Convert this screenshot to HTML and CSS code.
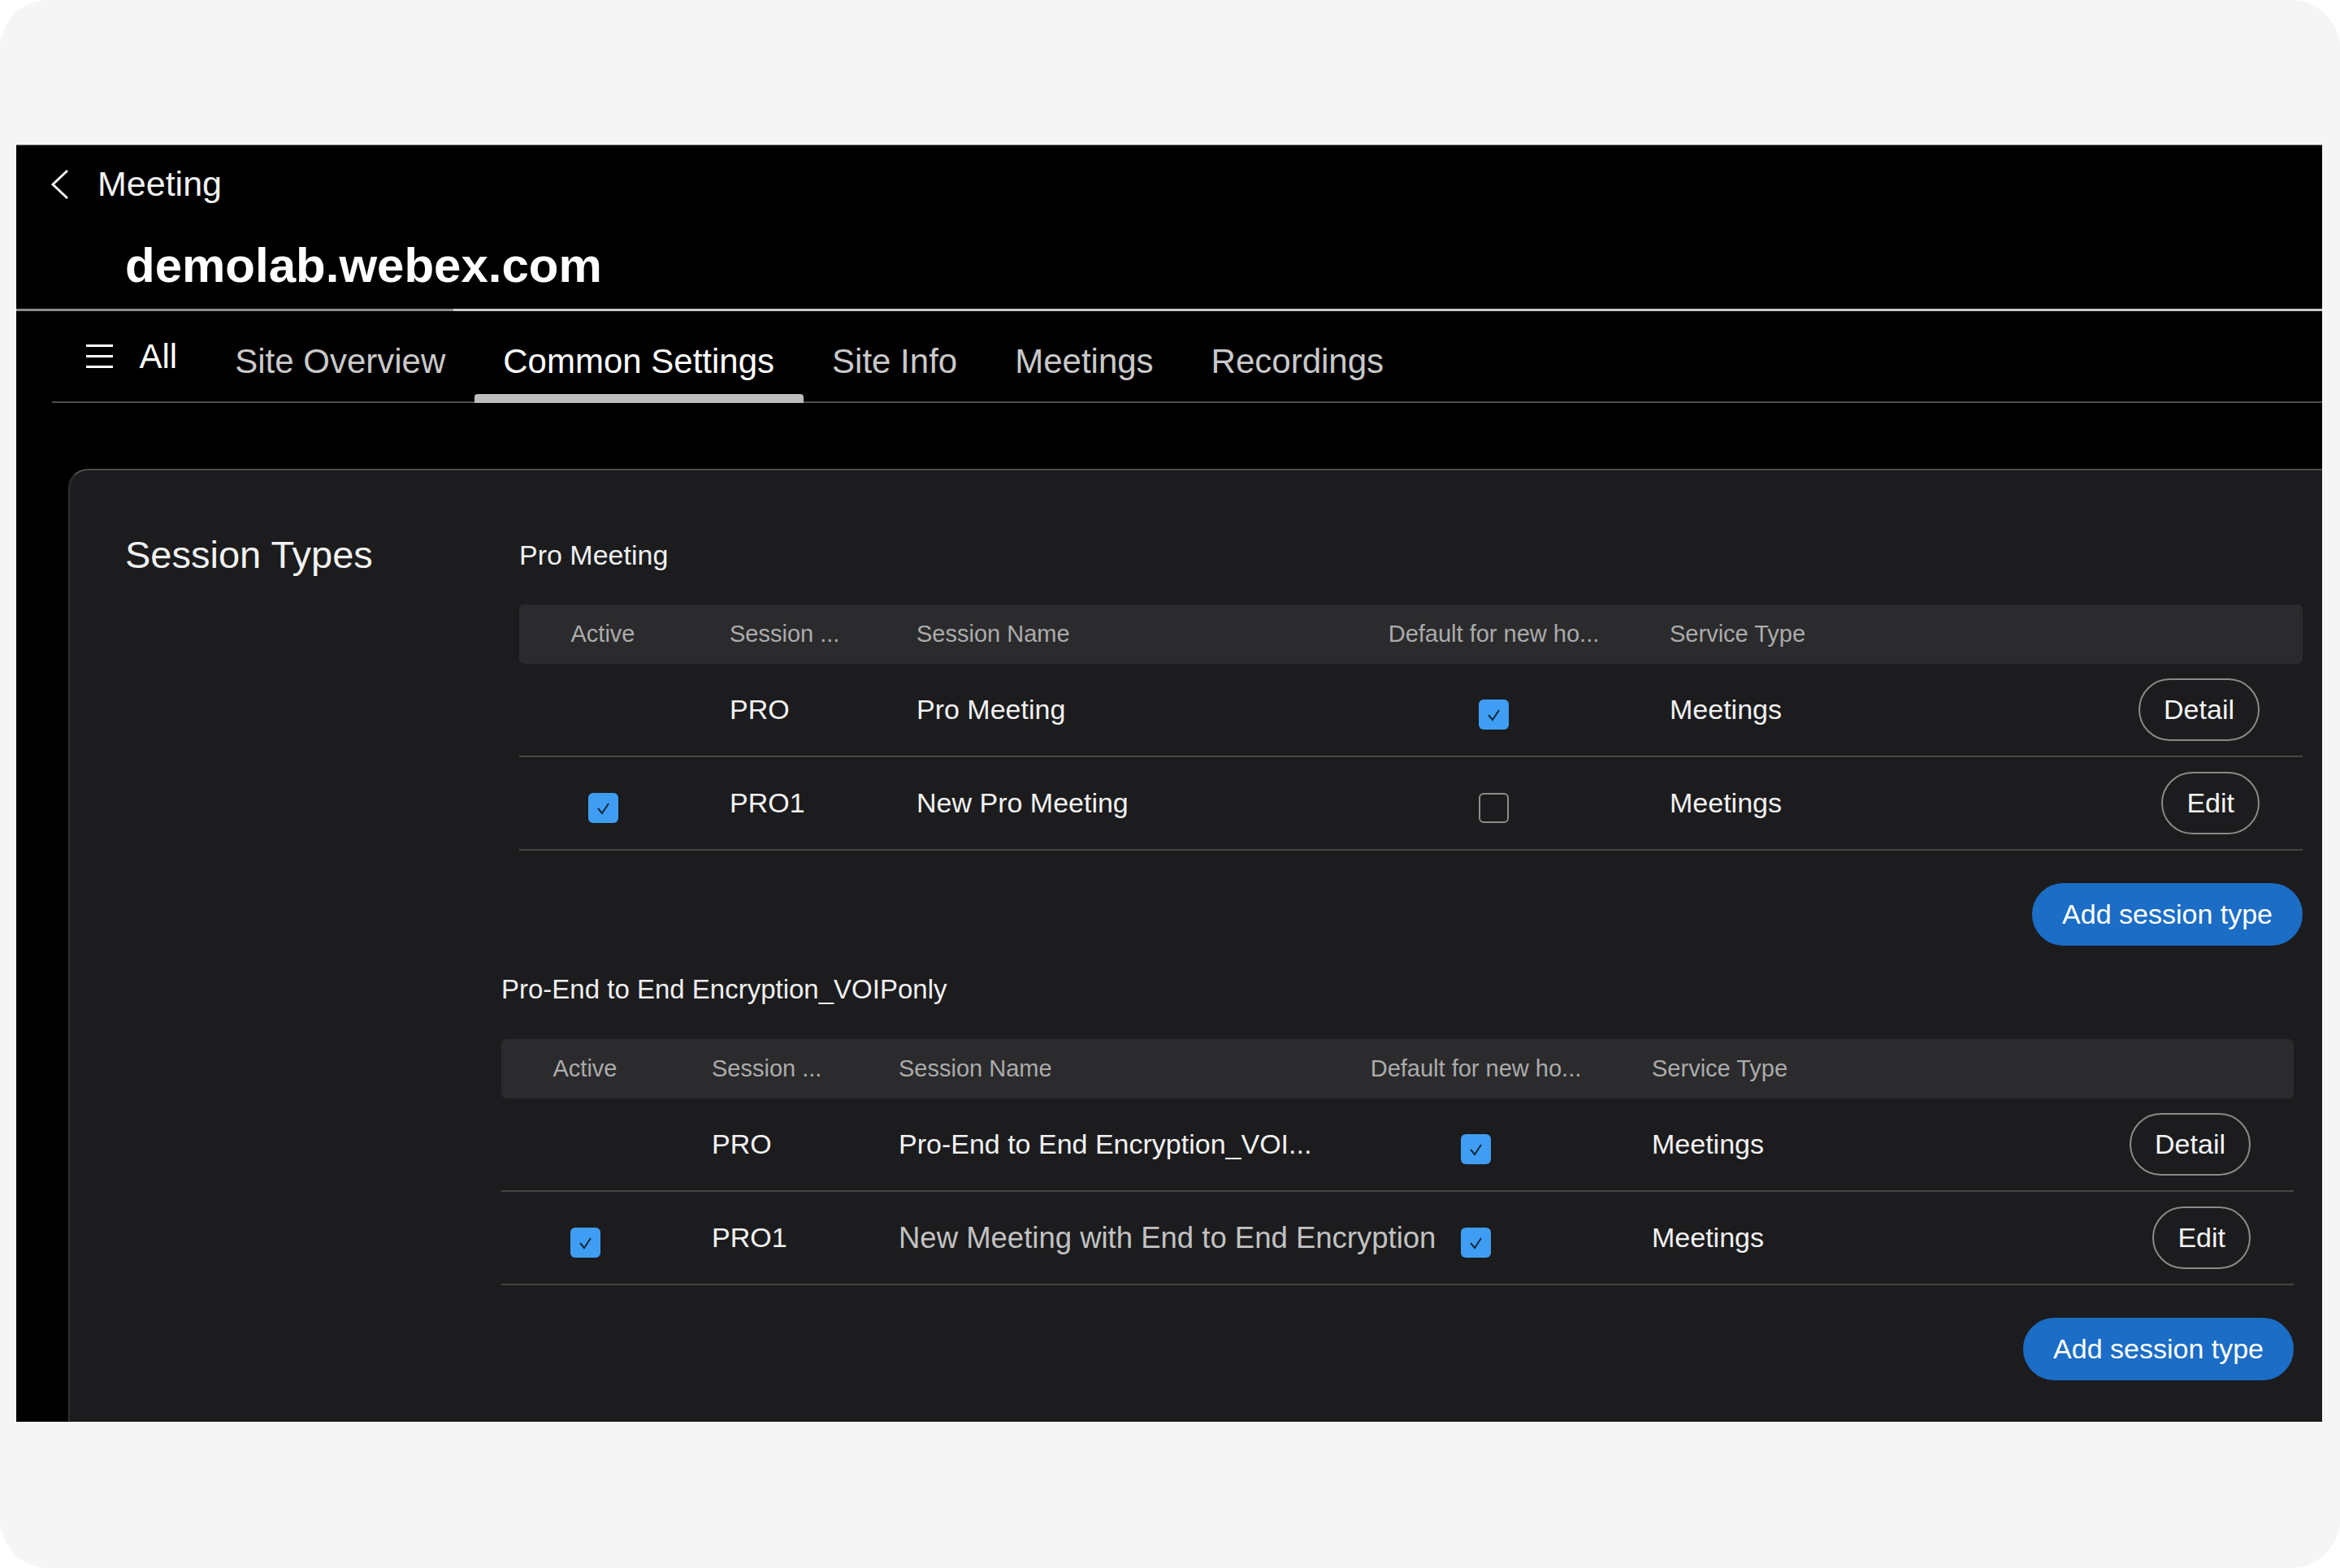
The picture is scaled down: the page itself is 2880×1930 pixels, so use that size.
FILE: index.html
```html
<!DOCTYPE html>
<html lang="en">
  <head>
    <meta charset="UTF-8" />
    <meta name="viewport" content="width=device-width, initial-scale=1.0" />
    <title>demolab.webex.com - Common Settings</title>
    <link rel="stylesheet" href="styles.css">
  </head>
  <body>
    <div class="frame">
      <div class="panel">
        <div class="topbar">
          <svg class="back" width="24" height="38" viewBox="0 0 24 38">
            <polyline points="21,2 3,19 21,36" fill="none" stroke="#f2f2f2" stroke-width="3" />
          </svg>
          <span>Meeting</span>
        </div>
        <h1 class="site">demolab.webex.com</h1>
        <div class="rule"></div>

        <nav class="tabs">
          <a class="tab all">
            <svg width="33" height="29" viewBox="0 0 33 29">
              <rect x="0" y="0" width="33" height="3" fill="#fff" />
              <rect x="0" y="13" width="33" height="3" fill="#fff" />
              <rect x="0" y="26" width="33" height="3" fill="#fff" />
            </svg>
            <span>All</span>
          </a>
          <a class="tab">Site Overview</a>
          <a class="tab active">Common Settings</a>
          <a class="tab">Site Info</a>
          <a class="tab">Meetings</a>
          <a class="tab">Recordings</a>
        </nav>

        <div class="card">
          <h2 class="card-title">Session Types</h2>
          <div class="sections">
            <section class="group">
              <h3>Pro Meeting</h3>
              <div class="table">
                <div class="row head">
                  <div class="c-active">Active</div>
                  <div class="c-code">Session ...</div>
                  <div class="c-name">Session Name</div>
                  <div class="c-default">Default for new ho...</div>
                  <div class="c-service">Service Type</div>
                  <div class="c-act"></div>
                </div>
                <div class="row">
                  <div class="c-active"></div>
                  <div class="c-code">PRO</div>
                  <div class="c-name">Pro Meeting</div>
                  <div class="c-default"><span class="check"><svg viewBox="0 0 37 37"><polyline points="12,19 17,25 25,13" /></svg></span></div>
                  <div class="c-service">Meetings</div>
                  <div class="c-act"><button class="btn">Detail</button></div>
                </div>
                <div class="row">
                  <div class="c-active"><span class="check"><svg viewBox="0 0 37 37"><polyline points="12,19 17,25 25,13" /></svg></span></div>
                  <div class="c-code">PRO1</div>
                  <div class="c-name">New Pro Meeting</div>
                  <div class="c-default"><span class="check off"></span></div>
                  <div class="c-service">Meetings</div>
                  <div class="c-act"><button class="btn">Edit</button></div>
                </div>
              </div>
              <div class="actions">
                <button class="btn primary">Add session type</button>
              </div>
            </section>

            <section class="group shift">
              <h3>Pro-End to End Encryption_VOIPonly</h3>
              <div class="table">
                <div class="row head">
                  <div class="c-active">Active</div>
                  <div class="c-code">Session ...</div>
                  <div class="c-name">Session Name</div>
                  <div class="c-default">Default for new ho...</div>
                  <div class="c-service">Service Type</div>
                  <div class="c-act"></div>
                </div>
                <div class="row">
                  <div class="c-active"></div>
                  <div class="c-code">PRO</div>
                  <div class="c-name">Pro-End to End Encryption_VOI...</div>
                  <div class="c-default"><span class="check"><svg viewBox="0 0 37 37"><polyline points="12,19 17,25 25,13" /></svg></span></div>
                  <div class="c-service">Meetings</div>
                  <div class="c-act"><button class="btn">Detail</button></div>
                </div>
                <div class="row">
                  <div class="c-active"><span class="check"><svg viewBox="0 0 37 37"><polyline points="12,19 17,25 25,13" /></svg></span></div>
                  <div class="c-code">PRO1</div>
                  <div class="c-name dim">New Meeting with End to End Encryption</div>
                  <div class="c-default"><span class="check"><svg viewBox="0 0 37 37"><polyline points="12,19 17,25 25,13" /></svg></span></div>
                  <div class="c-service">Meetings</div>
                  <div class="c-act"><button class="btn">Edit</button></div>
                </div>
              </div>
              <div class="actions">
                <button class="btn primary">Add session type</button>
              </div>
            </section>
          </div>
        </div>
      </div>
    </div>
  </body>
</html>
```

FILE: styles.css
```css
body {
  margin: 0;
  background-color: #fff;
  font-family: "Liberation Sans", Arial, sans-serif;
}

.frame {
  width: 2880px;
  height: 1930px;
  box-sizing: border-box;
  padding: 178px 22px 180px 20px;
  background-color: #f5f5f5;
  border-radius: 60px;
}

.panel {
  height: 100%;
  display: flex;
  flex-direction: column;
  background-color: #000;
  border-top: 1px solid #6e6e6e;
  box-sizing: border-box;
}

.topbar {
  height: 95px;
  display: flex;
  align-items: center;
  gap: 34px;
  padding-left: 42px;
  font-size: 43px;
  color: #f2f2f2;
}

.site {
  margin: 0;
  height: 106px;
  line-height: 106px;
  padding-left: 134px;
  font-size: 60px;
  font-weight: bold;
  color: #fff;
}

.rule {
  height: 3px;
  background: linear-gradient(to right, #8d8d8d 0 538px, #c6cacd 538px);
}

.tabs {
  display: flex;
  height: 113px;
  box-sizing: border-box;
  margin-left: 44px;
  padding-left: 6px;
  border-bottom: 2px solid #4d4d4d;
}

.tab {
  position: relative;
  display: flex;
  align-items: center;
  height: 111px;
  box-sizing: border-box;
  padding: 13px 35.5px 0;
  font-size: 42px;
  color: #c9c9c9;
  white-space: nowrap;
}

.tab.all {
  gap: 33px;
  padding-top: 0;
  color: #fff;
}

.tab.active {
  color: #fff;
}

.tab.active::after {
  content: "";
  position: absolute;
  left: 0;
  right: 0;
  bottom: -2px;
  height: 11px;
  background-color: #bdbdbd;
  border-radius: 4px 4px 0 0;
}

.card {
  flex: 1;
  display: grid;
  grid-template-columns: 553px 1fr;
  align-items: start;
  margin: 81px 0 0 64px;
  padding: 84px 24px 0 0;
  background-color: #1c1c1e;
  border-top: 2px solid #4e4e4e;
  border-left: 2px solid #2f2f2f;
  border-top-left-radius: 24px;
}

.card-title {
  margin: 0;
  padding-left: 68px;
  font-size: 47px;
  line-height: 40px;
  font-weight: normal;
  color: #f2f2f2;
}

.group h3 {
  margin: 0 0 41px;
  font-size: 34px;
  line-height: 40px;
  font-weight: normal;
  color: #f0f0f0;
}

.group + .group {
  margin-top: 34px;
}

.group.shift {
  margin-left: -22px;
  margin-right: 11px;
}

.group.shift h3 {
  font-size: 33px;
}

.row {
  display: grid;
  grid-template-columns: 206px 283px 580px 261px 1fr auto;
  align-items: center;
  height: 115px;
  box-sizing: border-box;
  border-bottom: 2px solid #464646;
  font-size: 34px;
  color: #f2f2f2;
  white-space: nowrap;
}

.row.head {
  height: 73px;
  border-bottom: none;
  border-radius: 6px;
  background-color: #2b2b2d;
  font-size: 29px;
  color: #ababab;
}

.c-active,
.c-default {
  text-align: center;
}

.c-code {
  padding-left: 53px;
}

.c-service {
  padding-left: 86px;
}

.c-act {
  text-align: right;
  padding-right: 53px;
}

.c-name.dim {
  font-size: 36.5px;
  color: #c2c2c2;
}

.check {
  display: inline-block;
  width: 37px;
  height: 37px;
  margin-top: 12px;
  box-sizing: border-box;
  border-radius: 6px;
  background-color: #3f9ef3;
  vertical-align: middle;
}

.check svg {
  display: block;
  width: 37px;
  height: 37px;
}

.check polyline {
  fill: none;
  stroke: #12283d;
  stroke-width: 2;
}

.check.off {
  background: none;
  border: 2px solid #8c8c8c;
}

.btn {
  height: 77px;
  padding: 0 29px;
  border: 2px solid #8a8a8a;
  border-radius: 39px;
  background: none;
  color: #f5f5f5;
  font-family: "Liberation Sans", Arial, sans-serif;
  font-size: 34px;
  cursor: pointer;
}

.actions {
  display: flex;
  justify-content: flex-end;
  margin-top: 40px;
}

.btn.primary {
  padding: 0 35px;
  border-color: #1b6dc6;
  background-color: #1b6dc6;
  color: #fff;
}
```
